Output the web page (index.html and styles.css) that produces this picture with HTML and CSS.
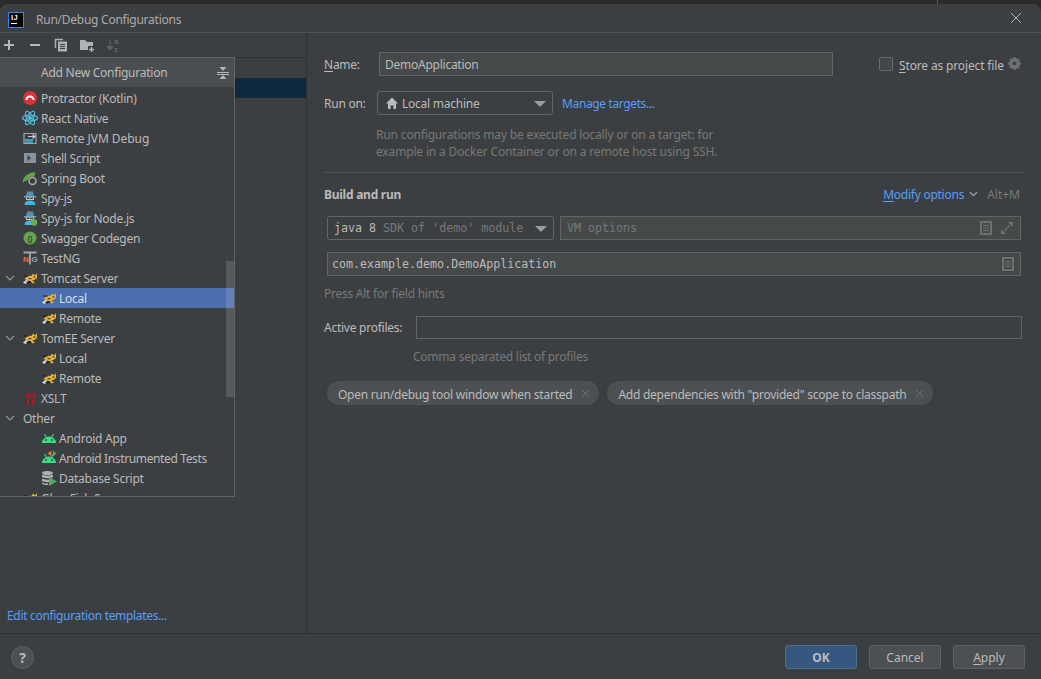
FILE: index.html
```html
<!DOCTYPE html>
<html lang="en">
<head>
<meta charset="utf-8">
<title>Run/Debug Configurations</title>
<link rel="stylesheet" href="styles.css">
</head>
<body>
<svg class="defs" width="0" height="0" aria-hidden="true">
  <symbol id="cat" viewBox="0 0 16 16">
    <path d="M1 12.500 5 9.500 6.500 12 3.500 14Z" fill="#dcdcdc"/>
    <path d="M2.500 9 6 5.500 9.500 6 11 3.500 12.500 5 13.500 5 15 3 15 8 12.500 10 10 10.500 13 12.500 11 13.500 6.500 10.500Z" fill="#e3b23c"/>
    <path d="M2 5.500h5v1H2zM11.500 6.500h2v1h-2zM4 12 8.500 11 9.500 12.500 5.500 13.500Z" fill="#1f1d18"/>
    <path d="M6 8 10 8.500 8 9.500Z" fill="#1f1d18"/>
  </symbol>
  <symbol id="android" viewBox="0 0 16 16">
    <path d="M1 13a7 6.500 0 0 1 14 0Z" fill="#3ddc84"/>
    <path d="M3.500 4 5.500 7.500M12.500 4 10.500 7.500" stroke="#3ddc84" stroke-width="1.100"/>
    <circle cx="5" cy="10" r=".9" fill="#3c3f41"/><circle cx="11" cy="10" r=".9" fill="#3c3f41"/>
  </symbol>
  <symbol id="doc" viewBox="0 0 12 14">
    <path d="M1 1h10v12H1Z" fill="none" stroke="currentColor" stroke-width="2"/>
    <path d="M3 4.500h6M3 7h6M3 9.500h6" stroke="currentColor"/>
  </symbol>
</svg>

<div class="topstrip"><span class="strip-line"></span></div>

<div class="dialog">
  <header class="titlebar">
    <span class="ij-logo"><span class="ij-text">IJ</span><span class="ij-bar"></span></span>
    <span class="title">Run/Debug Configurations</span>
    <svg class="close" width="12" height="12" viewBox="0 0 12 12"><path d="M1 1l10 10M11 1L1 11" stroke="#b4b4b4" stroke-width="1"/></svg>
  </header>

  <div class="content">
    <aside class="left">
      <div class="toolbar">
        <svg class="tool" width="16" height="16" viewBox="0 0 16 16"><path d="M3 8h10M8 3v10" stroke="#b4b8bb" stroke-width="2"/></svg>
        <svg class="tool" width="16" height="16" viewBox="0 0 16 16"><path d="M3 8h10" stroke="#b4b8bb" stroke-width="2"/></svg>
        <svg class="tool" width="16" height="16" viewBox="0 0 16 16"><path d="M2.500 11V2.500H10" fill="none" stroke="#aeb2b5" stroke-width="1.500"/><path d="M5 4.500h9v10H5Z" fill="#aeb2b5"/><path d="M7 7.500h5M7 9.500h5M7 11.500h5" stroke="#3c3f41"/></svg>
        <svg class="tool" width="16" height="16" viewBox="0 0 16 16"><path d="M1 3h5l2 2h6v4H9v4H1Z" fill="#aeb2b5"/><path d="M10 12.500h5M12.500 10v5" stroke="#aeb2b5" stroke-width="1.600"/></svg>
        <svg class="tool" width="16" height="16" viewBox="0 0 16 16"><path d="M5 3v9M2 9.500 5 13l3-3.500Z" stroke="#5f6366" fill="#5f6366"/><text x="9" y="7" class="az">a</text><text x="9" y="14.500" class="az">z</text></svg>
      </div>
      <div class="tree">
        <div class="tree-selected"></div>
      </div>
      <a class="link templates">Edit configuration templates...</a>

      <div class="popup">
        <div class="popup-head">
          <span>Add New Configuration</span>
          <svg class="collapse" width="14" height="14" viewBox="0 0 14 14"><path d="M1 6.500h12M1 8.500h12" stroke="#b4b8bb" stroke-width="1"/><path d="M3.500 1h7L7 5ZM3.500 13h7L7 9Z" fill="#b4b8bb"/></svg>
        </div>
        <div class="popup-list">
          <div class="row">
            <svg class="ico" viewBox="0 0 16 16"><circle cx="8" cy="8" r="7" fill="#e0313b"/><path d="M3.500 10a4.500 4.500 0 0 1 9 0Z" fill="#fff"/><path d="M5.500 10a2.500 2.500 0 0 1 5 0Z" fill="#e0313b"/></svg>
            <span>Protractor (Kotlin)</span>
          </div>
          <div class="row">
            <svg class="ico" viewBox="0 0 16 16" fill="none" stroke="#53c1de" stroke-width="1.100"><ellipse cx="8" cy="8" rx="7.500" ry="3"/><ellipse cx="8" cy="8" rx="7.500" ry="3" transform="rotate(60 8 8)"/><ellipse cx="8" cy="8" rx="7.500" ry="3" transform="rotate(120 8 8)"/><circle cx="8" cy="8" r="1.400" fill="#53c1de"/></svg>
            <span>React Native</span>
          </div>
          <div class="row">
            <svg class="ico" viewBox="0 0 16 16"><path d="M2 3.500h12v10H2Z" fill="none" stroke="#9aa7b0" stroke-width="1.200"/><path d="M3 9h8v4H3Z" fill="#40b6e0" opacity=".75"/><path d="M6 6.500h7M10.500 4.500l2.500 2-2.500 2" fill="none" stroke="#c5ccd1" stroke-width="1.200"/></svg>
            <span class="wide">Remote JVM Debug</span>
          </div>
          <div class="row">
            <svg class="ico" viewBox="0 0 16 16"><path d="M2 3h12v10H2Z" fill="#9aa7b0" opacity=".8"/><path d="M5.500 5 9 8l-3.500 3Z" fill="#3c3f41"/></svg>
            <span>Shell Script</span>
          </div>
          <div class="row">
            <svg class="ico" viewBox="0 0 16 16"><path d="M1 13C0 7 6 3 13 2c0 4-1 6-3 7-3 1-7 1-9 4Z" fill="#62a54a"/><circle cx="10.500" cy="11" r="4.500" fill="#3c3f41"/><circle cx="10.500" cy="11" r="3.500" fill="none" stroke="#a9adb0" stroke-width="1.500"/></svg>
            <span>Spring Boot</span>
          </div>
          <div class="row">
            <svg class="ico" viewBox="0 0 16 16"><path d="M5 1.500h6L12 6H4Z" fill="#5a8fb0"/><path d="M2 6h12v1.500H2Z" fill="#6fa8cc"/><path d="M4 7.500h8V10H4Z" fill="#e0c3a0"/><path d="M5 8h2.500v1H5ZM8.500 8H11v1H8.500Z" fill="#2b2b2b"/><path d="M2.500 15c0-3 2-4.500 5.500-4.500S13.500 12 13.500 15Z" fill="#40b6e0"/></svg>
            <span>Spy-js</span>
          </div>
          <div class="row">
            <svg class="ico" viewBox="0 0 16 16"><path d="M5 1.500h6L12 6H4Z" fill="#5a8fb0"/><path d="M2 6h12v1.500H2Z" fill="#6fa8cc"/><path d="M4 7.500h8V10H4Z" fill="#e0c3a0"/><path d="M5 8h2.500v1H5ZM8.500 8H11v1H8.500Z" fill="#2b2b2b"/><path d="M2.500 15c0-3 2-4.500 5.500-4.500S13.500 12 13.500 15Z" fill="#40b6e0"/><circle cx="12" cy="12.500" r="3.200" fill="#6cab4f"/></svg>
            <span>Spy-js for Node.js</span>
          </div>
          <div class="row">
            <svg class="ico" viewBox="0 0 16 16"><circle cx="8" cy="8" r="6.500" fill="#62a54a"/><text x="8" y="10.500" class="braces">{}</text></svg>
            <span>Swagger Codegen</span>
          </div>
          <div class="row">
            <svg class="ico ico-ng" viewBox="0 0 16 16"><path d="M1.500 2.500h13M8 2.500v12" stroke="#9aa7b0" stroke-width="1.800"/><text x="1" y="12" class="ng ng-n">N</text><text x="9.500" y="12" class="ng ng-g">G</text></svg>
            <span>TestNG</span>
          </div>
          <div class="row">
            <svg class="chev" viewBox="0 0 10 6"><path d="M1 .8 5 4.800 9 .8" fill="none" stroke="#9a9da0" stroke-width="1.200"/></svg>
            <svg class="ico"><use href="#cat"/></svg>
            <span>Tomcat Server</span>
          </div>
          <div class="row child selected">
            <svg class="ico"><use href="#cat"/></svg>
            <span>Local</span>
          </div>
          <div class="row child">
            <svg class="ico"><use href="#cat"/></svg>
            <span>Remote</span>
          </div>
          <div class="row">
            <svg class="chev" viewBox="0 0 10 6"><path d="M1 .8 5 4.800 9 .8" fill="none" stroke="#9a9da0" stroke-width="1.200"/></svg>
            <svg class="ico"><use href="#cat"/></svg>
            <span>TomEE Server</span>
          </div>
          <div class="row child">
            <svg class="ico"><use href="#cat"/></svg>
            <span>Local</span>
          </div>
          <div class="row child">
            <svg class="ico"><use href="#cat"/></svg>
            <span>Remote</span>
          </div>
          <div class="row">
            <svg class="ico" viewBox="0 0 16 16"><text x="8" y="7.500" class="xslt">XS</text><text x="8" y="15" class="xslt">LT</text></svg>
            <span>XSLT</span>
          </div>
          <div class="row group">
            <svg class="chev" viewBox="0 0 10 6"><path d="M1 .8 5 4.800 9 .8" fill="none" stroke="#9a9da0" stroke-width="1.200"/></svg>
            <span>Other</span>
          </div>
          <div class="row child">
            <svg class="ico"><use href="#android"/></svg>
            <span>Android App</span>
          </div>
          <div class="row child">
            <svg class="ico" viewBox="0 0 16 16"><use href="#android"/><path d="M10.500 .5 6.500 3.500l4 3Z" fill="#e8703a"/><path d="M12 .5l3.500 3-3.500 3Z" fill="#62a54a"/></svg>
            <span class="narrow">Android Instrumented Tests</span>
          </div>
          <div class="row child">
            <svg class="ico" viewBox="0 0 16 16"><ellipse cx="6.500" cy="3" rx="5.500" ry="2" fill="#afb1b3"/><path d="M1 4.500c2 1.500 9 1.500 11 0V7c-2 1.500-9 1.500-11 0ZM1 8.500c2 1.500 9 1.500 11 0V11c-2 1.500-9 1.500-11 0ZM1 12.500c2 1 4 1 6 1V15c-3 0-5-.5-6-1.500Z" fill="#afb1b3"/><path d="M8 7l8 4.500-8 4.500Z" fill="#59a869"/></svg>
            <span>Database Script</span>
          </div>
          <div class="row">
            <svg class="chev" viewBox="0 0 10 6"><path d="M1 .8 5 4.800 9 .8" fill="none" stroke="#9a9da0" stroke-width="1.200"/></svg>
            <svg class="ico"><use href="#cat"/></svg>
            <span>GlassFish Server</span>
          </div>
        </div>
        <div class="scrollbar"></div>
      </div>
    </aside>

    <main class="right">
      <div class="name-row">
        <label class="name-label"><u>N</u>ame:</label>
        <div class="field name-field">DemoApplication</div>
        <span class="checkbox"></span>
        <span class="store"><u>S</u>tore as project file</span>
        <svg class="gear" width="16" height="16" viewBox="0 0 16 16"><circle cx="7.500" cy="7.500" r="4" fill="none" stroke="#6e7072" stroke-width="3"/><path d="M7.500 1v13M1 7.500h13M3 3l9 9M12 3l-9 9" stroke="#6e7072" stroke-width="2"/><circle cx="7.500" cy="7.500" r="1.800" fill="#3c3f41"/></svg>
      </div>

      <div class="runon-row">
        <span class="runon-label">Run on:</span>
        <div class="combo runon-combo">
          <svg class="home" width="14" height="14" viewBox="0 0 14 14"><path d="M7 1.500 13 7.500h-2V13H8.500V9.500h-3V13H3V7.500H1Z" fill="#bbb"/></svg>
          <span>Local machine</span>
          <svg class="caret" width="12" height="6" viewBox="0 0 12 6"><path d="M0 0h12L6 6Z" fill="#9a9da0"/></svg>
        </div>
        <a class="link manage">Manage targets...</a>
      </div>

      <p class="help">Run configurations may be executed locally or on a target: for<br>example in a Docker Container or on a remote host using SSH.</p>

      <div class="separator"></div>

      <div class="section-head">
        <h2>Build and run</h2>
        <a class="link modify"><u>M</u>odify options</a>
        <svg class="mod-chev" width="9" height="6" viewBox="0 0 10 6"><path d="M1 .8 5 4.800 9 .8" fill="none" stroke="#9a9da0" stroke-width="1.500"/></svg>
        <span class="shortcut">Alt+M</span>
      </div>

      <div class="jre-row">
        <div class="combo jre-combo mono">
          <span class="jre-main">java 8</span><span class="jre-dim">SDK of 'demo' module</span>
          <svg class="caret" width="12" height="6" viewBox="0 0 12 6"><path d="M0 0h12L6 6Z" fill="#9a9da0"/></svg>
        </div>
        <div class="field vm-field mono">
          <span class="vm-text">VM options</span>
          <svg class="doc" width="12" height="14"><use href="#doc"/></svg>
          <svg class="expand" width="14" height="14" viewBox="0 0 14 14"><path d="M8 1h5v5ZM1 8v5h5Z" fill="#6e7072"/><path d="M10 4 4 10" stroke="#6e7072" stroke-width="1.200"/></svg>
        </div>
      </div>

      <div class="field main-field mono">
        <span>com.example.demo.DemoApplication</span>
        <svg class="doc" width="12" height="14"><use href="#doc"/></svg>
      </div>

      <p class="hint">Press Alt for field hints</p>

      <div class="profiles-row">
        <span>Active profiles:</span>
        <div class="profiles-input"></div>
      </div>

      <p class="profiles-hint">Comma separated list of profiles</p>

      <div class="chips">
        <span class="chip">Open run/debug tool window when started<svg class="chip-x" width="9" height="9" viewBox="0 0 9 9"><path d="M1 1l7 7M8 1L1 8" stroke="#707375"/></svg></span>
        <span class="chip">Add dependencies with "provided" scope to classpath<svg class="chip-x" width="9" height="9" viewBox="0 0 9 9"><path d="M1 1l7 7M8 1L1 8" stroke="#707375"/></svg></span>
      </div>
    </main>
  </div>

  <footer class="footer">
    <span class="help-btn">?</span>
    <button class="btn btn-ok">OK</button>
    <button class="btn">Cancel</button>
    <button class="btn"><u>A</u>pply</button>
  </footer>
</div>
</body>
</html>
```
FILE: styles.css
```css
* { box-sizing: border-box; }
html, body { margin: 0; padding: 0; }
body {
  width: 1041px;
  height: 679px;
  overflow: hidden;
  background: #2b2b2b;
  color: #bbbbbb;
  font: 12px "Noto Sans", "Liberation Sans", sans-serif;
  letter-spacing: -.25px;
}
.defs { position: absolute; }
p, h2 { margin: 0; }
u { text-underline-offset: 2px; }
.mono { font-family: "DejaVu Sans Mono", "Liberation Mono", monospace; font-size: 11.65px; letter-spacing: 0; }
.link { color: #589df6; }

.topstrip { height: 4px; display: flex; justify-content: flex-end; padding-right: 103px; }
.strip-line { width: 1px; height: 4px; background: #55585a; }

.dialog {
  height: 675px;
  display: flex;
  flex-direction: column;
  background: #3c3f41;
  border-radius: 8px 8px 0 0;
}
.titlebar {
  height: 29px;
  flex: none;
  display: flex;
  align-items: center;
  padding: 3px 19px 0 8px;
  border-bottom: 1px solid #515151;
}
.ij-logo {
  width: 16px;
  height: 16px;
  background: #000;
  border: 1px solid #2c8ee8;
  display: flex;
  flex-direction: column;
  padding: 1px 0 0 2px;
  margin-right: 12px;
}
.ij-text { color: #fff; font: bold 7.500px/8px "Liberation Sans", sans-serif; letter-spacing: .5px; }
.ij-bar { width: 6px; height: 1px; background: #fff; margin-top: 1px; }
.title { flex: 1; color: #a9abad; }
.close { margin-top: -4px; }

.content { flex: 1; min-height: 0; display: flex; }
.left {
  position: relative;
  width: 307px;
  flex: none;
  display: flex;
  flex-direction: column;
  border-right: 1px solid #323232;
}
.toolbar {
  height: 25px;
  flex: none;
  display: flex;
  align-items: center;
  padding-left: 1px;
  gap: 10px;
  border-bottom: 1px solid #323232;
}
.tool { flex: none; }
.az { font: bold 8px "Liberation Sans", sans-serif; fill: #5f6366; }
.tree { flex: 1; padding-top: 20px; }
.tree-selected { height: 20px; background: #0d293e; }
.templates { padding: 0 0 9px 7px; letter-spacing: -.32px; }

.popup {
  position: absolute;
  left: 0;
  top: 24px;
  width: 235px;
  height: 440px;
  display: flex;
  flex-direction: column;
  background: #3c3f41;
  border: solid #646464;
  border-width: 1px 1px 1px 0;
  overflow: hidden;
}
.popup-head {
  height: 29px;
  flex: none;
  display: flex;
  align-items: center;
  justify-content: space-between;
  padding: 0 4px 0 41px;
  background: #4b4e50;
}
.popup-list { padding-top: 1px; }
.row {
  height: 20px;
  display: flex;
  align-items: center;
  padding-left: 22px;
  position: relative;
}
.row .ico { width: 16px; height: 16px; flex: none; margin-right: 3px; }
.row.child { padding-left: 41px; }
.row.child .ico { margin-right: 2px; }
.row.group { padding-left: 23px; }
.row.selected { background: #4b6eaf; color: #d8dde6; }
.wide { letter-spacing: -.05px; }
.narrow { letter-spacing: -.37px; }
.chev { position: absolute; left: 5px; top: 7px; width: 10px; height: 6px; }
.ico-ng { overflow: visible; }
.braces { font: bold 7px "Liberation Sans", sans-serif; fill: #3c3f41; text-anchor: middle; }
.ng { font: bold 8px "Liberation Sans", sans-serif; }
.ng-n { fill: #e8703a; }
.ng-g { fill: #9aa7b0; }
.xslt { font: bold 8px "Liberation Sans", sans-serif; fill: #c90c0c; text-anchor: middle; }
.scrollbar {
  position: absolute;
  right: 0;
  top: 203px;
  width: 8px;
  height: 136px;
  background: rgba(255, 255, 255, .14);
}

.right { flex: 1; min-width: 0; padding: 19px 16px 0 17px; }
.name-row { display: flex; align-items: center; height: 24px; white-space: nowrap; }
.name-label { width: 55px; }
.field { background: #45494a; border: 1px solid #646464; display: flex; align-items: center; }
.name-field { width: 454px; height: 24px; padding-left: 5px; }
.checkbox {
  width: 14px;
  height: 14px;
  flex: none;
  margin-left: 46px;
  border: 1px solid #6b6b6b;
  border-radius: 2px;
  background: #43474a;
}
.store { margin-left: 6px; padding-top: 2px; letter-spacing: -.15px; }
.gear { margin-left: 3px; flex: none; }

.runon-row { display: flex; align-items: center; height: 24px; margin-top: 15px; }
.runon-label { width: 53px; }
.combo { display: flex; align-items: center; height: 24px; border: 1px solid #646464; border-radius: 3px; position: relative; }
.runon-combo { width: 176px; padding-left: 7px; }
.home { margin-right: 3px; }
.caret { position: absolute; right: 6px; top: 9px; }
.runon-row .manage { margin-left: 9px; letter-spacing: -.37px; }
.help { margin: 11px 0 0 52px; line-height: 17px; color: #787878; letter-spacing: -.16px; }
.separator { height: 1px; background: #515151; margin: 12px 0 0; }
.section-head { display: flex; align-items: center; height: 20px; margin-top: 11px; }
.section-head h2 { flex: 1; font-size: 12px; font-weight: 700; }
.mod-chev { margin: 0 9px 0 5px; }
.shortcut { color: #787878; margin-right: 5px; letter-spacing: 0; }

.jre-row { display: flex; gap: 6px; margin: 12px 4px 0 3px; }
.jre-combo { width: 227px; padding-left: 6px; }
.jre-main { margin-right: 7px; }
.jre-dim { color: #787878; }
.vm-field { flex: 1; height: 24px; padding: 0 6px 0 6px; }
.vm-text { flex: 1; color: #787878; }
.doc { color: #6e7072; }
.expand { margin-left: 8px; }
.main-field { height: 24px; margin: 12px 4px 0 3px; padding: 0 6px 0 4px; }
.main-field span { flex: 1; }
.hint { margin-top: 9px; color: #787878; line-height: 17px; }
.profiles-row { display: flex; align-items: center; height: 24px; margin-top: 13px; }
.profiles-row span { width: 92px; }
.profiles-input { width: 606px; height: 23px; border: 1px solid #646464; }
.profiles-hint { margin: 9px 0 0 89px; color: #787878; line-height: 17px; }
.chips { display: flex; gap: 8px; margin: 16px 0 0 3px; }
.chip {
  height: 24px;
  display: flex;
  align-items: center;
  padding: 2px 9px 0 11px;
  border-radius: 12px;
  background: #4c5052;
}
.chip-x { margin: -2px 0 0 9px; }

.footer {
  height: 46px;
  flex: none;
  display: flex;
  align-items: center;
  gap: 12px;
  padding: 1px 16px 0 11px;
  border-top: 1px solid #323232;
}
.help-btn {
  width: 23px;
  height: 23px;
  margin-right: auto;
  border-radius: 50%;
  background: #4c5052;
  border: 1px solid #5e6163;
  color: #bbbbbb;
  font: bold 14px/21px "Noto Sans", sans-serif;
  text-align: center;
}
.btn {
  width: 72px;
  height: 24px;
  padding: 0;
  border: 1px solid #5e6060;
  border-radius: 3px;
  background: #4c5052;
  color: #bbbbbb;
  font: 12px "Noto Sans", sans-serif;
}
.btn-ok { background: #365880; border-color: #4c708c; font-weight: 700; }
```
